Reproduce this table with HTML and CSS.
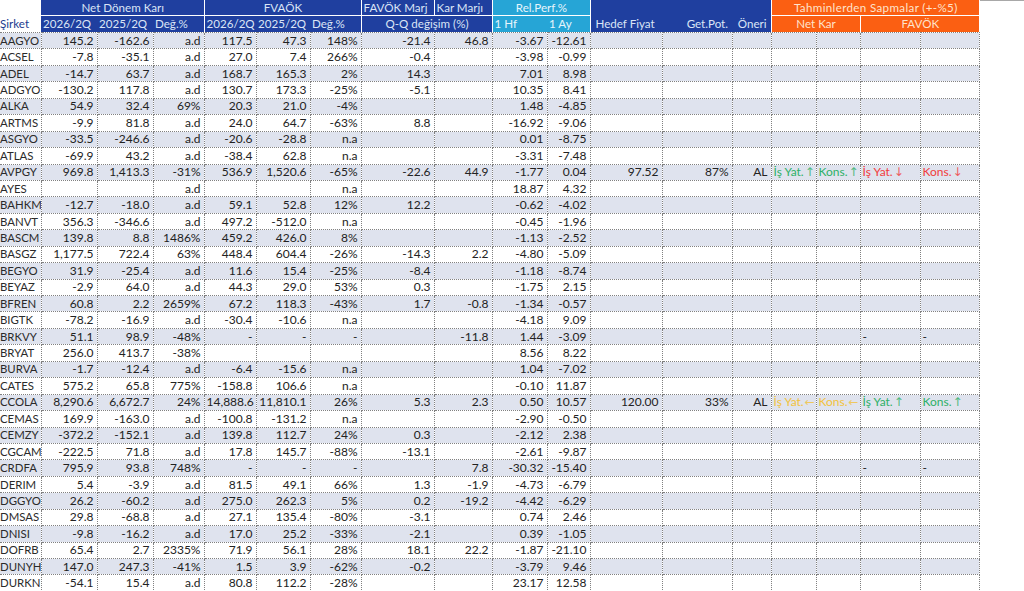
FILE: index.html
```html
<!DOCTYPE html>
<html lang="tr">
<head>
<meta charset="utf-8">
<title>Bilanço Tablosu</title>
<link rel="stylesheet" href="styles.css">
</head>
<body>
<table class="sheet">
<colgroup>
<col style="width:41px"><col style="width:56px"><col style="width:56px"><col style="width:51px"><col style="width:52px"><col style="width:54px"><col style="width:51px"><col style="width:73px"><col style="width:58px"><col style="width:55px"><col style="width:43px"><col style="width:72px"><col style="width:70px"><col style="width:39px"><col style="width:45px"><col style="width:44px"><col style="width:60px"><col style="width:59px">
</colgroup>
<thead>
<tr class="h1">
<th class="blank"></th>
<th colspan="3" class="c">Net Dönem Karı</th>
<th colspan="3" class="c gl">FVAÖK</th>
<th class="gl">FAVÖK Marj</th>
<th class="gl">Kar Marjı</th>
<th colspan="2" class="c cyan gl">Rel.Perf.%</th>
<th colspan="3" class="tall gl"></th>
<th colspan="4" class="c orange gl wide">Tahminlerden Sapmalar (+-%5)</th>
</tr>
<tr class="h2">
<th class="sirket">Şirket</th>
<th>2026/2Q</th><th>2025/2Q</th><th>Değ.%</th>
<th class="gl">2026/2Q</th><th>2025/2Q</th><th>Değ.%</th>
<th colspan="2" class="c gl">Q-Q değişim (%)</th>
<th class="cyan gl">1 Hf</th><th class="cyan">1 Ay</th>
<th class="gl hedef">Hedef Fiyat</th><th class="r">Get.Pot.</th><th class="r">Öneri</th>
<th colspan="2" class="c orange gl">Net Kar</th><th colspan="2" class="c orange gl">FAVÖK</th>
</tr>
</thead>
<tbody class="data">
<tr><td>AAGYO</td><td>145.2</td><td>-162.6</td><td>a.d</td><td>117.5</td><td>47.3</td><td>148%</td><td>-21.4</td><td>46.8</td><td>-3.67</td><td>-12.61</td><td></td><td></td><td></td><td></td><td></td><td></td><td></td></tr>
<tr><td>ACSEL</td><td>-7.8</td><td>-35.1</td><td>a.d</td><td>27.0</td><td>7.4</td><td>266%</td><td>-0.4</td><td></td><td>-3.98</td><td>-0.99</td><td></td><td></td><td></td><td></td><td></td><td></td><td></td></tr>
<tr><td>ADEL</td><td>-14.7</td><td>63.7</td><td>a.d</td><td>168.7</td><td>165.3</td><td>2%</td><td>14.3</td><td></td><td>7.01</td><td>8.98</td><td></td><td></td><td></td><td></td><td></td><td></td><td></td></tr>
<tr><td>ADGYO</td><td>-130.2</td><td>117.8</td><td>a.d</td><td>130.7</td><td>173.3</td><td>-25%</td><td>-5.1</td><td></td><td>10.35</td><td>8.41</td><td></td><td></td><td></td><td></td><td></td><td></td><td></td></tr>
<tr><td>ALKA</td><td>54.9</td><td>32.4</td><td>69%</td><td>20.3</td><td>21.0</td><td>-4%</td><td></td><td></td><td>1.48</td><td>-4.85</td><td></td><td></td><td></td><td></td><td></td><td></td><td></td></tr>
<tr><td>ARTMS</td><td>-9.9</td><td>81.8</td><td>a.d</td><td>24.0</td><td>64.7</td><td>-63%</td><td>8.8</td><td></td><td>-16.92</td><td>-9.06</td><td></td><td></td><td></td><td></td><td></td><td></td><td></td></tr>
<tr><td>ASGYO</td><td>-33.5</td><td>-246.6</td><td>a.d</td><td>-20.6</td><td>-28.8</td><td>n.a</td><td></td><td></td><td>0.01</td><td>-8.75</td><td></td><td></td><td></td><td></td><td></td><td></td><td></td></tr>
<tr><td>ATLAS</td><td>-69.9</td><td>43.2</td><td>a.d</td><td>-38.4</td><td>62.8</td><td>n.a</td><td></td><td></td><td>-3.31</td><td>-7.48</td><td></td><td></td><td></td><td></td><td></td><td></td><td></td></tr>
<tr><td>AVPGY</td><td>969.8</td><td>1,413.3</td><td>-31%</td><td>536.9</td><td>1,520.6</td><td>-65%</td><td>-22.6</td><td>44.9</td><td>-1.77</td><td>0.04</td><td>97.52</td><td>87%</td><td>AL</td><td class="up">İş Yat.<span class="ar">↑</span></td><td class="up">Kons.<span class="ar">↑</span></td><td class="down">İş Yat.<span class="ar">↓</span></td><td class="down">Kons.<span class="ar">↓</span></td></tr>
<tr><td>AYES</td><td></td><td></td><td>a.d</td><td></td><td></td><td>n.a</td><td></td><td></td><td>18.87</td><td>4.32</td><td></td><td></td><td></td><td></td><td></td><td></td><td></td></tr>
<tr><td>BAHKM</td><td>-12.7</td><td>-18.0</td><td>a.d</td><td>59.1</td><td>52.8</td><td>12%</td><td>12.2</td><td></td><td>-0.62</td><td>-4.02</td><td></td><td></td><td></td><td></td><td></td><td></td><td></td></tr>
<tr><td>BANVT</td><td>356.3</td><td>-346.6</td><td>a.d</td><td>497.2</td><td>-512.0</td><td>n.a</td><td></td><td></td><td>-0.45</td><td>-1.96</td><td></td><td></td><td></td><td></td><td></td><td></td><td></td></tr>
<tr><td>BASCM</td><td>139.8</td><td>8.8</td><td>1486%</td><td>459.2</td><td>426.0</td><td>8%</td><td></td><td></td><td>-1.13</td><td>-2.52</td><td></td><td></td><td></td><td></td><td></td><td></td><td></td></tr>
<tr><td>BASGZ</td><td>1,177.5</td><td>722.4</td><td>63%</td><td>448.4</td><td>604.4</td><td>-26%</td><td>-14.3</td><td>2.2</td><td>-4.80</td><td>-5.09</td><td></td><td></td><td></td><td></td><td></td><td></td><td></td></tr>
<tr><td>BEGYO</td><td>31.9</td><td>-25.4</td><td>a.d</td><td>11.6</td><td>15.4</td><td>-25%</td><td>-8.4</td><td></td><td>-1.18</td><td>-8.74</td><td></td><td></td><td></td><td></td><td></td><td></td><td></td></tr>
<tr><td>BEYAZ</td><td>-2.9</td><td>64.0</td><td>a.d</td><td>44.3</td><td>29.0</td><td>53%</td><td>0.3</td><td></td><td>-1.75</td><td>2.15</td><td></td><td></td><td></td><td></td><td></td><td></td><td></td></tr>
<tr><td>BFREN</td><td>60.8</td><td>2.2</td><td>2659%</td><td>67.2</td><td>118.3</td><td>-43%</td><td>1.7</td><td>-0.8</td><td>-1.34</td><td>-0.57</td><td></td><td></td><td></td><td></td><td></td><td></td><td></td></tr>
<tr><td>BIGTK</td><td>-78.2</td><td>-16.9</td><td>a.d</td><td>-30.4</td><td>-10.6</td><td>n.a</td><td></td><td></td><td>-4.18</td><td>9.09</td><td></td><td></td><td></td><td></td><td></td><td></td><td></td></tr>
<tr><td>BRKVY</td><td>51.1</td><td>98.9</td><td>-48%</td><td>-</td><td>-</td><td>-</td><td></td><td>-11.8</td><td>1.44</td><td>-3.09</td><td></td><td></td><td></td><td></td><td></td><td>-</td><td>-</td></tr>
<tr><td>BRYAT</td><td>256.0</td><td>413.7</td><td>-38%</td><td></td><td></td><td></td><td></td><td></td><td>8.56</td><td>8.22</td><td></td><td></td><td></td><td></td><td></td><td></td><td></td></tr>
<tr><td>BURVA</td><td>-1.7</td><td>-12.4</td><td>a.d</td><td>-6.4</td><td>-15.6</td><td>n.a</td><td></td><td></td><td>1.04</td><td>-7.02</td><td></td><td></td><td></td><td></td><td></td><td></td><td></td></tr>
<tr><td>CATES</td><td>575.2</td><td>65.8</td><td>775%</td><td>-158.8</td><td>106.6</td><td>n.a</td><td></td><td></td><td>-0.10</td><td>11.87</td><td></td><td></td><td></td><td></td><td></td><td></td><td></td></tr>
<tr><td>CCOLA</td><td>8,290.6</td><td>6,672.7</td><td>24%</td><td>14,888.6</td><td>11,810.1</td><td>26%</td><td>5.3</td><td>2.3</td><td>0.50</td><td>10.57</td><td>120.00</td><td>33%</td><td>AL</td><td class="side">İş Yat.<span class="ar">←</span></td><td class="side">Kons.<span class="ar">←</span></td><td class="up">İş Yat.<span class="ar">↑</span></td><td class="up">Kons.<span class="ar">↑</span></td></tr>
<tr><td>CEMAS</td><td>169.9</td><td>-163.0</td><td>a.d</td><td>-100.8</td><td>-131.2</td><td>n.a</td><td></td><td></td><td>-2.90</td><td>-0.50</td><td></td><td></td><td></td><td></td><td></td><td></td><td></td></tr>
<tr><td>CEMZY</td><td>-372.2</td><td>-152.1</td><td>a.d</td><td>139.8</td><td>112.7</td><td>24%</td><td>0.3</td><td></td><td>-2.12</td><td>2.38</td><td></td><td></td><td></td><td></td><td></td><td></td><td></td></tr>
<tr><td>CGCAM</td><td>-222.5</td><td>71.8</td><td>a.d</td><td>17.8</td><td>145.7</td><td>-88%</td><td>-13.1</td><td></td><td>-2.61</td><td>-9.87</td><td></td><td></td><td></td><td></td><td></td><td></td><td></td></tr>
<tr><td>CRDFA</td><td>795.9</td><td>93.8</td><td>748%</td><td>-</td><td>-</td><td>-</td><td></td><td>7.8</td><td>-30.32</td><td>-15.40</td><td></td><td></td><td></td><td></td><td></td><td>-</td><td>-</td></tr>
<tr><td>DERIM</td><td>5.4</td><td>-3.9</td><td>a.d</td><td>81.5</td><td>49.1</td><td>66%</td><td>1.3</td><td>-1.9</td><td>-4.73</td><td>-6.79</td><td></td><td></td><td></td><td></td><td></td><td></td><td></td></tr>
<tr><td>DGGYO</td><td>26.2</td><td>-60.2</td><td>a.d</td><td>275.0</td><td>262.3</td><td>5%</td><td>0.2</td><td>-19.2</td><td>-4.42</td><td>-6.29</td><td></td><td></td><td></td><td></td><td></td><td></td><td></td></tr>
<tr><td>DMSAS</td><td>29.8</td><td>-68.8</td><td>a.d</td><td>27.1</td><td>135.4</td><td>-80%</td><td>-3.1</td><td></td><td>0.74</td><td>2.46</td><td></td><td></td><td></td><td></td><td></td><td></td><td></td></tr>
<tr><td>DNISI</td><td>-9.8</td><td>-16.2</td><td>a.d</td><td>17.0</td><td>25.2</td><td>-33%</td><td>-2.1</td><td></td><td>0.39</td><td>-1.05</td><td></td><td></td><td></td><td></td><td></td><td></td><td></td></tr>
<tr><td>DOFRB</td><td>65.4</td><td>2.7</td><td>2335%</td><td>71.9</td><td>56.1</td><td>28%</td><td>18.1</td><td>22.2</td><td>-1.87</td><td>-21.10</td><td></td><td></td><td></td><td></td><td></td><td></td><td></td></tr>
<tr><td>DUNYH</td><td>147.0</td><td>247.3</td><td>-41%</td><td>1.5</td><td>3.9</td><td>-62%</td><td>-0.2</td><td></td><td>-3.79</td><td>9.46</td><td></td><td></td><td></td><td></td><td></td><td></td><td></td></tr>
<tr><td>DURKN</td><td>-54.1</td><td>15.4</td><td>a.d</td><td>80.8</td><td>112.2</td><td>-28%</td><td></td><td></td><td>23.17</td><td>12.58</td><td></td><td></td><td></td><td></td><td></td><td></td><td></td></tr>
</tbody>
</table>
<div class="edge"></div>
</body>
</html>
```
FILE: styles.css
```css
html, body {
  margin: 0;
  padding: 0;
  background: #fff;
}
body {
  font-family: Lato, "Liberation Sans", sans-serif;
  font-size: 12px;
  color: #222;
  display: flex;
  align-items: flex-start;
  height: 591px;
  overflow: hidden;
}
.sheet {
  flex: none;
  width: 979px;
  border-collapse: collapse;
  table-layout: fixed;
}
.edge {
  flex: 1;
  border-top: 1px solid #a8a8a8;
}

/* header */
.sheet th {
  font-weight: normal;
  font-size: 11.6px;
  color: #dbe5f6;
  background: #1f3f9f;
  padding: 0 1px 0 2px;
  text-align: left;
  white-space: nowrap;
  overflow: hidden;
  line-height: 14px;
  border: none;
}
.h1 th {
  height: 15px;
  border-bottom: 1px solid #fff;
}
.h2 th {
  height: 16px;
}
.sheet th.c { text-align: center; }
.sheet th.r { text-align: right; padding-right: 4px; }
.sheet th.hedef { padding-left: 5px; }
.sheet th.gl { border-left: 1px solid #fff; }
.sheet th.cyan { background: #26a5d6; color: #e6f5fc; }
.sheet th.orange { background: #fb5f12; color: #ffe3cc; }
.sheet th.wide { letter-spacing: 0.35px; }
.sheet th.blank { background: #fff; border-bottom: none; }
.sheet th.sirket {
  background: #fff;
  color: #1d3c8f;
  padding-left: 0;
}
.h1 th.tall { border-bottom: none; }

/* data */
.data td {
  height: 15.45px;
  padding: 0 3px 0 2px;
  line-height: 14px;
  border: 1px dotted #808080;
  white-space: nowrap;
  overflow: hidden;
  text-align: right;
}
.data tr:nth-child(odd) td { background: #dfe3ee; }
.data td:first-child {
  text-align: left;
  padding-left: 0;
  padding-right: 0;
  border-left: none;
  font-size: 11.4px;
  color: #2a2a2a;
}
.data td:nth-child(n+15) {
  text-align: left;
  padding-left: 2px;
}
.data td.up { color: #2eb067; }
.data td.down { color: #f23b3b; }
.data td.side { color: #f2c23c; }
.ar {
  font-family: "DejaVu Sans", sans-serif;
  font-size: 12px;
  line-height: 12px;
  margin-left: 1px;
  opacity: 0.8;
}
```
